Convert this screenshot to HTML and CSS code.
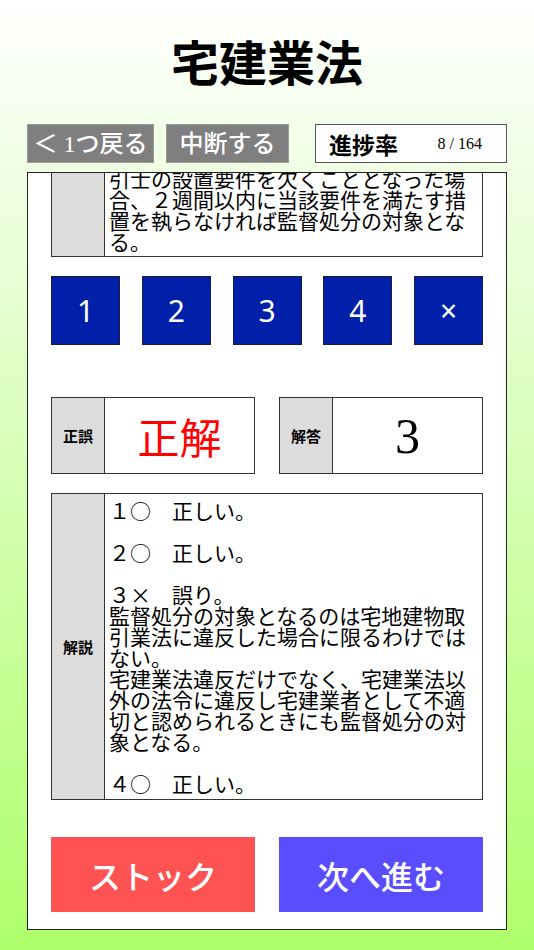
FILE: index.html
```html
<!DOCTYPE html>
<html lang="ja">
<head>
<meta charset="utf-8">
<title>宅建業法</title>
<link rel="stylesheet" href="styles.css">
</head>
<body>
<h1 class="title">宅建業法</h1>
<div class="toolbar">
  <button class="tool-btn back">＜&nbsp;1つ戻る</button>
  <button class="tool-btn suspend">中断する</button>
  <div class="progress"><span class="progress-label">進捗率</span><span class="progress-count">8 / 164</span></div>
</div>
<main class="panel">
  <section class="qa-box question">
    <div class="qa-label"></div>
    <div class="qa-text">引士の設置要件を欠くこととなった場合、２週間以内に当該要件を満たす措置を執らなければ監督処分の対象となる。</div>
  </section>
  <div class="choices">
    <button class="choice">1</button>
    <button class="choice">2</button>
    <button class="choice">3</button>
    <button class="choice">4</button>
    <button class="choice">×</button>
  </div>
  <div class="results">
    <div class="result"><div class="qa-label">正誤</div><div class="result-value verdict">正解</div></div>
    <div class="result"><div class="qa-label">解答</div><div class="result-value answer">3</div></div>
  </div>
  <section class="qa-box explanation">
    <div class="qa-label">解説</div>
    <div class="qa-text">１○　正しい。<br><br>２○　正しい。<br><br>３×　誤り。<br>監督処分の対象となるのは宅地建物取引業法に違反した場合に限るわけではない。<br>宅建業法違反だけでなく、宅建業法以外の法令に違反し宅建業者として不適切と認められるときにも監督処分の対象となる。<br><br>４○　正しい。</div>
  </section>
  <div class="actions">
    <button class="action stock">ストック</button>
    <button class="action next">次へ進む</button>
  </div>
</main>
</body>
</html>
```

FILE: styles.css
```css
html {
  height: 100%;
  background: linear-gradient(180deg, #ffffff 0%, #aeff6b 100%);
}

body {
  margin: 0;
  height: 950px;
  font-family: "Noto Sans CJK JP", "Noto Sans", sans-serif;
  color: #000;
}

.title {
  margin: 0;
  padding-top: 36px;
  font-size: 48px;
  line-height: 48px;
  font-weight: 700;
  text-align: center;
  font-family: "Noto Sans CJK JP", sans-serif;
}

.toolbar {
  display: flex;
  height: 39px;
  margin-top: 40px;
  padding: 0 27px;
}

.tool-btn {
  box-sizing: border-box;
  border: 1px solid #9a9a9a;
  background: #7f7f7f;
  color: #fff;
  font-family: "Liberation Serif", "Noto Sans CJK JP", serif;
  font-size: 24px;
  font-weight: 500;
  padding: 0;
  display: flex;
  align-items: center;
  justify-content: center;
  line-height: 1;
  white-space: nowrap;
}

.back {
  width: 127px;
}

.suspend {
  width: 123px;
  margin-left: 12px;
}

.progress {
  margin-left: auto;
  width: 192px;
  box-sizing: border-box;
  border: 1px solid #555;
  background: #fff;
  display: flex;
  align-items: center;
  justify-content: space-between;
  padding: 0 24px 0 13px;
}

.progress-label {
  font-size: 23px;
  font-weight: 700;
}

.progress-count {
  font-family: "Liberation Serif", serif;
  font-size: 16px;
}

.panel {
  box-sizing: border-box;
  width: 480px;
  height: 758px;
  margin: 9px auto 0;
  background: #fff;
  border: 1px solid #222;
  padding: 0 23px 17px;
  display: flex;
  flex-direction: column;
  justify-content: flex-end;
  overflow: hidden;
}

.panel > * {
  flex-shrink: 0;
}

.qa-box {
  display: flex;
  border: 1px solid #333;
  background: #fff;
}

.qa-label {
  width: 52px;
  flex-shrink: 0;
  background: #dcdcdc;
  border-right: 1px solid #333;
  display: flex;
  align-items: center;
  justify-content: center;
  font-size: 15px;
  font-weight: 700;
}

.qa-text {
  flex: 1;
  padding: 5px 4px 4px;
  font-size: 21px;
  line-height: 21px;
}

.question {
  margin-bottom: 19px;
}

.explanation {
  margin-bottom: 37px;
}

.explanation .qa-text {
  padding: 6px 4px 5px;
}

.choices {
  display: flex;
  justify-content: space-between;
  height: 69px;
  margin-bottom: 52px;
}

.choice {
  width: 69px;
  height: 69px;
  box-sizing: border-box;
  background: #0020aa;
  border: 1px solid #1b1b3a;
  color: #fff;
  font-family: "Noto Sans", "Noto Sans CJK JP", sans-serif;
  font-size: 30px;
  padding: 0;
}

.results {
  display: flex;
  justify-content: space-between;
  height: 77px;
  margin-bottom: 19px;
}

.result {
  width: 204px;
  box-sizing: border-box;
  display: flex;
  border: 1px solid #333;
  background: #fff;
}

.result-value {
  flex: 1;
  display: flex;
  align-items: center;
  justify-content: center;
}

.verdict {
  color: #ff0000;
  font-size: 42px;
}

.answer {
  font-family: "Liberation Serif", serif;
  font-size: 50px;
}

.actions {
  display: flex;
  justify-content: space-between;
  height: 75px;
}

.action {
  width: 204px;
  border: 0;
  color: #fff;
  font-size: 32px;
  font-family: "Noto Sans CJK JP", sans-serif;
  font-weight: 500;
  padding: 0;
}

.stock {
  background: #ff5353;
}

.next {
  background: #5a4dff;
}
```
